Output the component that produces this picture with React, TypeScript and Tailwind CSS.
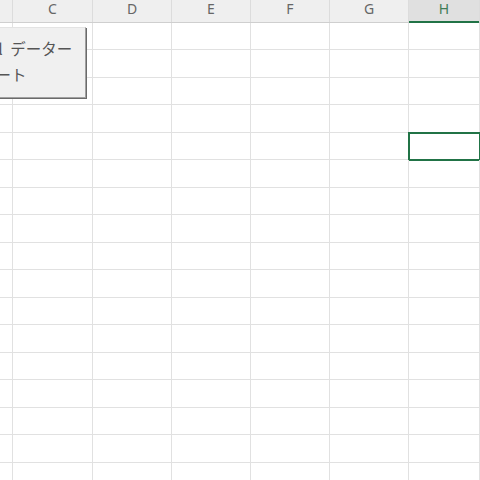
const columns = [
  { key: 'B', label: '', width: 'w-[13px]' },
  { key: 'C', label: 'C', width: 'w-[80px]' },
  { key: 'D', label: 'D', width: 'w-[79px]' },
  { key: 'E', label: 'E', width: 'w-[79px]' },
  { key: 'F', label: 'F', width: 'w-[79px]' },
  { key: 'G', label: 'G', width: 'w-[79px]' },
  { key: 'H', label: 'H', width: 'flex-1' },
];

const rows = Array.from({ length: 17 }, (_, i) => i);

export default function App() {
  return (
    <div className="relative w-[480px] h-[480px] overflow-hidden bg-white font-['Noto_Sans','Noto_Sans_CJK_JP',sans-serif]">
      {/* column headers */}
      <div className="flex h-[22.5px] bg-[#efefef] border-b border-[#cfcfcf]">
        {columns.map((col) => {
          const active = col.key === 'H';
          return (
            <div
              key={col.key}
              className={`${col.width} relative shrink-0 border-r border-[#dcdcdc] text-center text-[14px] leading-[18px] ${
                active ? 'bg-[#e0e0e0] text-[#3f7d57]' : 'text-[#666666]'
              }`}
            >
              {col.label}
              {active && <div className="absolute left-0 right-0 -bottom-[1.5px] h-[2px] bg-[#217346]" />}
            </div>
          );
        })}
      </div>

      {/* cells */}
      {rows.map((r) => (
        <div key={r} className="flex h-[27.5px] border-b border-[#e1e1e1]">
          {columns.map((col) => (
            <div key={col.key} className={`${col.width} relative shrink-0 border-r border-[#e1e1e1]`}>
              {r === 4 && col.key === 'H' && (
                <div className="absolute -left-[1px] -top-[1px] -right-[2px] -bottom-[1.5px] border-2 border-[#217346]" />
              )}
            </div>
          ))}
        </div>
      ))}

      {/* form button over the sheet */}
      <div className="absolute left-[-70px] top-[27px] w-[156px] h-[71px] bg-[#f0f0f0] border-t border-l border-[#e3e3e3] border-r border-b border-r-[#a0a0a0] border-b-[#a0a0a0] shadow-[1px_1px_0_#6a6a6a] pt-[7px] text-[15.5px] leading-[26px] text-[#555555] font-['Noto_Sans_CJK_JP',sans-serif] whitespace-pre overflow-hidden">
        <div className="pl-[35px]">Excel{'\u2002'}データー</div>
        <div className="pl-[18px]">インポート</div>
      </div>
    </div>
  );
}
